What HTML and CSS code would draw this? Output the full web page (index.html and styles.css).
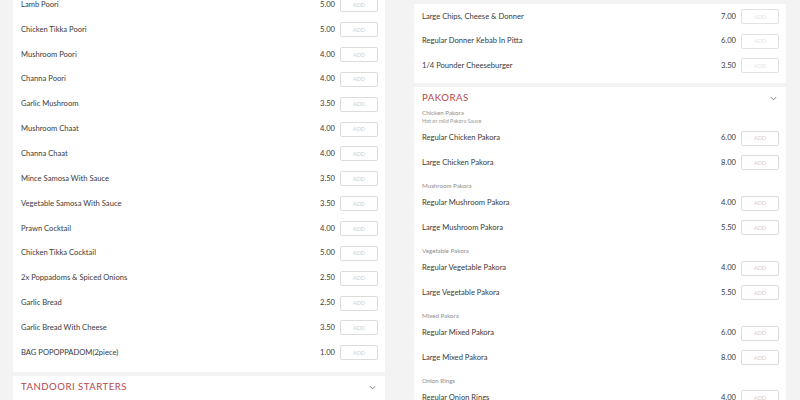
FILE: index.html
```html
<!DOCTYPE html>
<html>
<head>
<meta charset="utf-8">
<link rel="stylesheet" href="styles.css">
</head>
<body>
<div class="page">
  <div class="col col-left">
    <div class="card">
      <div class="row"><span class="name">Lamb Poori</span><span class="price">5.00</span><button class="add">ADD</button></div>
      <div class="row"><span class="name">Chicken Tikka Poori</span><span class="price">5.00</span><button class="add">ADD</button></div>
      <div class="row"><span class="name">Mushroom Poori</span><span class="price">4.00</span><button class="add">ADD</button></div>
      <div class="row"><span class="name">Channa Poori</span><span class="price">4.00</span><button class="add">ADD</button></div>
      <div class="row"><span class="name">Garlic Mushroom</span><span class="price">3.50</span><button class="add">ADD</button></div>
      <div class="row"><span class="name">Mushroom Chaat</span><span class="price">4.00</span><button class="add">ADD</button></div>
      <div class="row"><span class="name">Channa Chaat</span><span class="price">4.00</span><button class="add">ADD</button></div>
      <div class="row"><span class="name">Mince Samosa With Sauce</span><span class="price">3.50</span><button class="add">ADD</button></div>
      <div class="row"><span class="name">Vegetable Samosa With Sauce</span><span class="price">3.50</span><button class="add">ADD</button></div>
      <div class="row"><span class="name">Prawn Cocktail</span><span class="price">4.00</span><button class="add">ADD</button></div>
      <div class="row"><span class="name">Chicken Tikka Cocktail</span><span class="price">5.00</span><button class="add">ADD</button></div>
      <div class="row"><span class="name">2x Poppadoms &amp; Spiced Onions</span><span class="price">2.50</span><button class="add">ADD</button></div>
      <div class="row"><span class="name">Garlic Bread</span><span class="price">2.50</span><button class="add">ADD</button></div>
      <div class="row"><span class="name">Garlic Bread With Cheese</span><span class="price">3.50</span><button class="add">ADD</button></div>
      <div class="row"><span class="name">BAG POPOPPADOM(2piece)</span><span class="price">1.00</span><button class="add">ADD</button></div>
    </div>
    <div class="card">
      <div class="head"><span class="title">TANDOORI STARTERS</span><svg class="chev" viewBox="0 0 8 5" width="7" height="5"><path d="M1 1 L4 4 L7 1" fill="none" stroke="#777" stroke-width="1.1"/></svg></div>
      <div class="sub sub-first">Tandoori</div>
    </div>
  </div>
  <div class="col col-right">
    <div class="card card-top">
      <div class="row"><span class="name">Large Chips, Cheese &amp; Donner</span><span class="price">7.00</span><button class="add faint">ADD</button></div>
      <div class="row"><span class="name">Regular Donner Kebab In Pitta</span><span class="price">6.00</span><button class="add faint">ADD</button></div>
      <div class="row"><span class="name">1/4 Pounder Cheeseburger</span><span class="price">3.50</span><button class="add faint">ADD</button></div>
    </div>
    <div class="card">
      <div class="head"><span class="title">PAKORAS</span><svg class="chev" viewBox="0 0 8 5" width="7" height="5"><path d="M1 1 L4 4 L7 1" fill="none" stroke="#777" stroke-width="1.1"/></svg></div>
      <div class="sub sub-first">Chicken Pakora<span class="desc">Hot or mild Pakora Sauce</span></div>
      <div class="row row-after-desc"><span class="name">Regular Chicken Pakora</span><span class="price">6.00</span><button class="add">ADD</button></div>
      <div class="row"><span class="name">Large Chicken Pakora</span><span class="price">8.00</span><button class="add">ADD</button></div>
      <div class="sub">Mushroom Pakora</div>
      <div class="row"><span class="name">Regular Mushroom Pakora</span><span class="price">4.00</span><button class="add">ADD</button></div>
      <div class="row"><span class="name">Large Mushroom Pakora</span><span class="price">5.50</span><button class="add">ADD</button></div>
      <div class="sub">Vegetable Pakora</div>
      <div class="row"><span class="name">Regular Vegetable Pakora</span><span class="price">4.00</span><button class="add">ADD</button></div>
      <div class="row"><span class="name">Large Vegetable Pakora</span><span class="price">5.50</span><button class="add">ADD</button></div>
      <div class="sub">Mixed Pakora</div>
      <div class="row"><span class="name">Regular Mixed Pakora</span><span class="price">6.00</span><button class="add">ADD</button></div>
      <div class="row"><span class="name">Large Mixed Pakora</span><span class="price">8.00</span><button class="add">ADD</button></div>
      <div class="sub">Onion Rings</div>
      <div class="row"><span class="name">Regular Onion Rings</span><span class="price">4.00</span><button class="add">ADD</button></div>
    </div>
  </div>
</div>
</body>
</html>
```
FILE: styles.css
```css
html, body {
  margin: 0;
  padding: 0;
  background: #f3f3f3;
  height: 400px;
  overflow: hidden;
  font-family: Lato, "Open Sans", sans-serif;
  color: #3a3a3a;
}
.page {
  display: flex;
  gap: 29px;
  padding: 0 14px 0 13px;
}
.col {
  flex: 1;
  display: flex;
  flex-direction: column;
  gap: 4px;
}
.col-left { margin-top: -8.5px; }
.col-right { margin-top: 3.5px; }
.card {
  background: #fff;
  padding-bottom: 8px;
}
.card-top { padding-bottom: 5.5px; }
.row {
  height: 24.85px;
  display: flex;
  align-items: center;
  padding: 0 7px 0 8px;
  font-size: 7.6px;
}
.card-top .row { height: 24.6px; }
.name { flex: 1; color: #3a3a3a; }
.price { color: #3a3a3a; margin-right: 5px; }
.add {
  width: 38px;
  height: 15px;
  border: 1px solid #dcdcdc;
  border-radius: 2px;
  background: #fff;
  color: #cfcfcf;
  font-family: Lato, sans-serif;
  font-size: 5.5px;
  padding: 0;
  margin-top: 2px;
}
.add.faint { color: #e4e4e4; border-color: #e2e2e2; }
.head {
  display: flex;
  align-items: center;
  justify-content: space-between;
  padding: 3px 9px 0 8px;
  height: 15px;
}
.title {
  color: #b6474b;
  font-size: 9.6px;
  letter-spacing: 0.5px;
}
.chev { margin-top: 2px; }
.sub {
  display: flex;
  flex-direction: column;
  padding: 7.3px 8px 0;
  font-size: 6.2px;
  color: #8d8d8d;
  line-height: 8px;
}
.sub-first { padding-top: 4.5px; }
.desc { font-size: 5.4px; color: #999; line-height: 7px; margin-top: 1px; }
.row-after-desc { height: 24.2px; }
```
